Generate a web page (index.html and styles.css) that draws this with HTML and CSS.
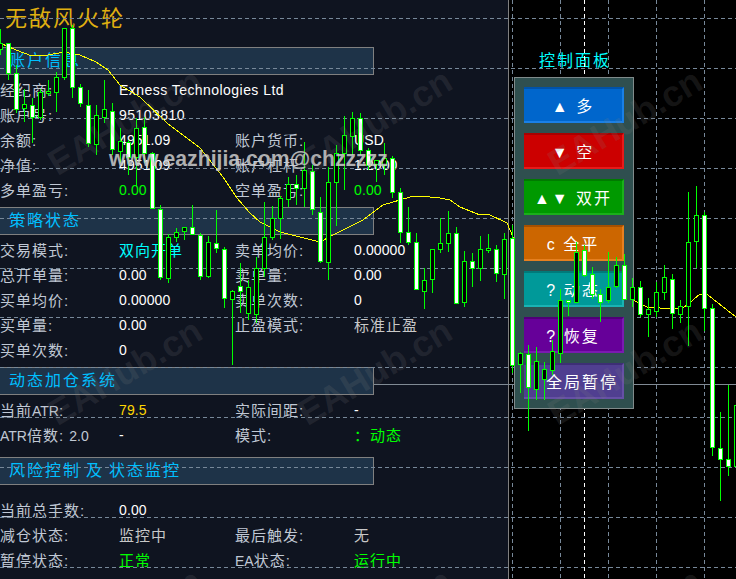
FILE: index.html
```html
<!DOCTYPE html>
<html lang="zh">
<head>
    <meta charset="UTF-8">
    <title>无敌风火轮</title>
    <link rel="stylesheet" href="styles.css">
</head>
<body>
    <div class="terminal">
        <div class="comment">4951.09 4951.50 4950.82 4951.09 1.2000 4951.09 4951.50 4950.82 4951.09 1.20</div>

        <div class="info-panel">
            <div class="ea-title">无敌风火轮</div>

            <section class="block block-account">
                <div class="block-head">账户信息</div>
                <div class="rows">
                    <span class="label">经纪商:</span><span class="value wide">Exness Technologies Ltd</span>
                    <span class="label">账户号:</span><span class="value wide">95103810</span>
                    <span class="label">余额:</span><span class="value">4951.09</span>
                    <span class="label">账户货币:</span><span class="value">USD</span>
                    <span class="label">净值:</span><span class="value">4951.09</span>
                    <span class="label">账户杠杆:</span><span class="value">1:2000</span>
                    <span class="label">多单盈亏:</span><span class="value green">0.00</span>
                    <span class="label">空单盈亏:</span><span class="value green">0.00</span>
                </div>
            </section>

            <section class="block block-strategy">
                <div class="block-head">策略状态</div>
                <div class="rows">
                    <span class="label">交易模式:</span><span class="value cjk cyan">双向开单</span>
                    <span class="label">卖单均价:</span><span class="value">0.00000</span>
                    <span class="label">总开单量:</span><span class="value">0.00</span>
                    <span class="label">卖单量:</span><span class="value">0.00</span>
                    <span class="label">买单均价:</span><span class="value">0.00000</span>
                    <span class="label">卖单次数:</span><span class="value">0</span>
                    <span class="label">买单量:</span><span class="value">0.00</span>
                    <span class="label">止盈模式:</span><span class="value cjk silver">标准止盈</span>
                    <span class="label">买单次数:</span><span class="value">0</span>
                </div>
            </section>

            <section class="block block-atr">
                <div class="block-head">动态加仓系统</div>
                <div class="rows">
                    <span class="label">当前<span class="latin">ATR</span>:</span><span class="value gold">79.5</span>
                    <span class="label">实际间距:</span><span class="value">-</span>
                    <span class="label"><span class="latin">ATR</span>倍数: <span class="latin">2.0</span></span><span class="value">-</span>
                    <span class="label">模式:</span><span class="value cjk green">：动态</span>
                </div>
            </section>

            <section class="block block-risk">
                <div class="block-head">风险控制 及 状态监控</div>
                <div class="rows rows-gap">
                    <span class="label">当前总手数:</span><span class="value">0.00</span>
                    <span class="empty"></span><span class="empty"></span>
                    <span class="label">减仓状态:</span><span class="value cjk silver">监控中</span>
                    <span class="label">最后触发:</span><span class="value cjk silver">无</span>
                    <span class="label">暂停状态:</span><span class="value cjk green">正常</span>
                    <span class="label"><span class="latin">EA</span>状态:</span><span class="value cjk green">运行中</span>
                </div>
            </section>
        </div>

        <div class="controls-title">控制面板</div>

        <svg class="layer" id="gridLayer" width="736" height="579"></svg>

        <div class="controls">
            <button class="btn btn-blue">▲ 多</button>
            <button class="btn btn-red">▼ 空</button>
            <button class="btn btn-green">▲▼ 双开</button>
            <button class="btn btn-orange">c 全平</button>
            <button class="btn btn-teal">? 动态</button>
            <button class="btn btn-purple">? 恢复</button>
            <button class="btn btn-slate">全局暂停</button>
        </div>

        <svg class="layer" id="candleLayer" width="736" height="579"></svg>

        <div class="contact">www.eazhijia.com@chzzzzz</div>

        <div class="watermarks">
            <span>EAHub.cn</span><span>EAHub.cn</span><span>EAHub.cn</span>
            <span>EAHub.cn</span><span>EAHub.cn</span><span>EAHub.cn</span>
            <span>EAHub.cn</span><span>EAHub.cn</span><span>EAHub.cn</span>
        </div>
    </div>

    <script src="chart.js"></script>
</body>
</html>
```

FILE: styles.css
```css
* {
    box-sizing: border-box;
}
body {
    margin: 0;
    background: #000;
    font-family: "Liberation Sans", "Noto Sans CJK SC", sans-serif;
}
.terminal {
    position: relative;
    width: 736px;
    height: 579px;
    overflow: hidden;
    background: #000;
}
.comment {
    position: absolute;
    top: -12px;
    left: 0;
    z-index: 1;
    font-size: 12px;
    line-height: 14px;
    letter-spacing: 0.4px;
    white-space: nowrap;
    color: #fff;
}
.info-panel {
    width: 509px;
    height: 579px;
    background: #0f1420;
    border-right: 1px solid #808080;
}
.ea-title {
    height: 47px;
    padding: 3px 0 0 5px;
    font-size: 22px;
    line-height: 32px;
    letter-spacing: 2px;
    color: #e0b010;
}
.block-account,
.block-strategy {
    height: 160px;
}
.block-atr {
    height: 90px;
}
.block-head {
    width: 375px;
    height: 28px;
    margin-left: -1px;
    padding-left: 9px;
    background: #1e3348;
    border: 1px solid #808080;
    font-size: 16px;
    line-height: 25px;
    letter-spacing: 2px;
    word-spacing: -1.5px;
    color: #00bfff;
}
.rows {
    display: grid;
    grid-template-columns: 119px 116px 119px 1fr;
    grid-auto-rows: 25px;
    padding-top: 3px;
    font-size: 14px;
    line-height: 25px;
    white-space: nowrap;
}
.rows-gap {
    padding-top: 13px;
}
.label {
    font-size: 15px;
    letter-spacing: 1px;
    color: #c0c8d4;
}
.latin {
    font-size: 14px;
    letter-spacing: 0;
}
.value {
    letter-spacing: 0.1px;
    color: #fff;
}
.wide {
    grid-column: span 3;
    letter-spacing: 0.45px;
}
.cjk {
    font-size: 15px;
    letter-spacing: 1px;
}
.cyan {
    color: #00ffff;
}
.green {
    color: #00ff00;
}
.gold {
    color: #ffd700;
}
.silver {
    color: #c8c8c8;
}
.controls-title {
    position: absolute;
    top: 49px;
    left: 539px;
    font-size: 16px;
    line-height: 24px;
    letter-spacing: 2px;
    color: #00ffff;
}
.layer {
    position: absolute;
    top: 0;
    left: 0;
}
.controls {
    position: absolute;
    top: 77px;
    left: 514px;
    width: 120px;
    height: 332px;
    padding: 9px;
    display: flex;
    flex-direction: column;
    gap: 10px;
    background: #2f4f4f;
    border: 1px solid #808a8a;
}
.btn {
    width: 100px;
    height: 36px;
    padding: 0;
    border: 0 solid;
    border-width: 2px 2px 2px 0;
    font-family: "Liberation Sans", "Noto Sans CJK SC", sans-serif;
    font-size: 16px;
    letter-spacing: 2px;
    color: #fff;
}
.btn-blue {
    background: #0066cc;
    border-color: #0052a8 #1a80e6 #1a80e6;
}
.btn-red {
    background: #cc0000;
    border-color: #a80000 #e61a1a #e61a1a;
}
.btn-green {
    background: #009900;
    border-color: #007a00 #1ab01a #1ab01a;
}
.btn-orange {
    background: #cc6600;
    border-color: #a65000 #e68020 #e68020;
}
.btn-teal {
    background: #009999;
    border-color: #007a7a #1ab3b3 #1ab3b3;
}
.btn-purple {
    background: #660099;
    border-color: #4f0077 #7a1ab0 #7a1ab0;
}
.btn-slate {
    padding-left: 18px;
    background: #503f90;
    border-color: #3d2f75 #6650a5 #6650a5;
}
.contact {
    position: absolute;
    top: 146px;
    left: 109px;
    font-size: 21.2px;
    font-weight: bold;
    line-height: 26px;
    white-space: nowrap;
    color: rgba(205, 205, 205, 0.85);
}
.watermarks {
    position: absolute;
    top: -3px;
    left: 0;
    display: grid;
    grid-template-columns: repeat(3, 250px);
    grid-auto-rows: 250px;
    place-items: center;
    pointer-events: none;
}
.watermarks span {
    font-size: 36px;
    font-weight: bold;
    line-height: 40px;
    color: rgba(128, 128, 128, 0.16);
    transform: rotate(-31deg);
}
```

FILE: chart.js
```js
const NS = 'http://www.w3.org/2000/svg';
const GRID = '#778899';

// high, low, body top, body bottom, 1 = white body (one candle every 8px, starting at x=0)
const CANDLES = [
    [29,55,43,49,0],[43,80,43,73,1],[65,113,73,109,1],[89,122,104,108,0],[98,143,105,117,1],
    [89,120,92,117,0],[80,96,91,92,0],[72,112,77,92,0],[28,80,28,77,0],[25,98,28,87,1],
    [84,107,87,103,1],[90,147,105,143,1],[105,155,115,144,0],[80,123,109,117,0],[103,155,111,149,1],
    [128,163,141,151,0],[140,175,142,157,1],[118,187,128,157,0],[117,163,127,153,1],[152,209,153,208,1],
    [205,280,209,277,1],[234,283,237,278,0],[228,242,232,237,0],[227,240,227,231,0],[205,235,227,234,1],
    [233,280,235,276,1],[236,278,242,276,0],[210,253,243,248,1],[247,308,249,298,1],[290,365,291,299,0],
    [263,313,286,291,1],[280,320,287,313,0],[257,323,268,314,0],[202,277,237,268,0],[206,240,218,237,0],
    [196,239,198,218,0],[177,207,184,199,0],[175,205,184,188,1],[142,207,170,188,0],[165,215,171,209,1],
    [197,263,212,261,1],[167,280,182,262,0],[145,226,153,182,0],[116,190,135,153,0],[112,155,118,136,0],
    [113,155,118,150,1],[148,170,150,165,1],[160,182,160,164,0],[143,175,158,165,0],[156,198,158,192,1],
    [188,243,192,232,1],[207,245,232,242,1],[233,290,242,289,1],[268,309,280,291,0],[249,293,249,279,0],
    [218,253,243,249,0],[211,252,233,243,0],[227,303,233,303,1],[251,307,261,302,0],[253,287,261,268,1],
    [236,281,249,268,0],[234,253,248,249,0],[245,282,249,273,1],[233,299,239,274,0],[225,373,238,365,1],
    [352,393,353,364,0],[345,431,354,387,1],[347,400,361,389,0],[362,400,369,379,0],[340,375,351,370,0],
    [289,363,300,353,0],[300,316,300,302,1],[242,303,252,302,0],[245,277,250,275,1],[267,299,274,294,1],
    [289,322,294,302,1],[252,303,287,300,0],[257,288,265,286,0],[254,300,265,299,1],[278,307,287,299,0],
    [281,317,287,314,1],[298,337,309,314,0],[282,317,292,311,0],[265,300,277,292,0],[274,329,279,313,1],
    [300,323,306,314,0],[192,346,242,306,0],[186,268,215,241,0],[212,331,215,308,1],[304,456,308,447,1],
    [412,501,448,459,1],[385,476,459,466,1],[405,466,405,466,0]
];

const MA = [
    [0,43],[16,50],[32,56],[48,55],[64,52],[80,55],[96,62],[108,70],[120,85],[140,97],[167,123],
    [200,148],[223,177],[237,198],[250,213],[260,222],[280,232],[300,237],[320,242],[333,235],
    [363,220],[383,205],[400,200],[410,197],[420,196],[440,198],[450,200],[460,207],[480,215],
    [488,214],[507,223],[513,237],[560,280],[633,300],[647,307],[673,309],[683,308],[693,300],
    [700,294],[708,295],[727,310],[736,317]
];

const H_LINES = [18, 68, 118, 168, 218, 268, 317, 367, 417, 467, 517, 567];
const V_LINES = [512, 560, 584, 608, 656, 704];

function add(parent, name, attrs) {
    const el = document.createElementNS(NS, name);
    for (const key in attrs) el.setAttribute(key, attrs[key]);
    parent.appendChild(el);
    return el;
}

function rect(parent, x, y, w, h, fill) {
    add(parent, 'rect', { x, y, width: w, height: h, fill, 'shape-rendering': 'crispEdges' });
}

function drawGrid() {
    const svg = document.getElementById('gridLayer');

    H_LINES.forEach(y => {
        add(svg, 'line', { x1: 0, x2: 736, y1: y + 0.5, y2: y + 0.5, stroke: GRID, 'stroke-dasharray': '4 3' });
    });
    V_LINES.forEach(x => {
        add(svg, 'line', {
            x1: x + 0.5, x2: x + 0.5, y1: 0, y2: 579,
            stroke: x === 584 ? '#fff' : GRID,
            'stroke-dasharray': '4 3'
        });
    });

    // current price line
    add(svg, 'line', { x1: 374, x2: 736, y1: 384.5, y2: 384.5, stroke: '#808a94' });

    add(svg, 'polyline', {
        points: MA.map(p => p.join(',')).join(' '),
        fill: 'none',
        stroke: '#ffff00',
        'shape-rendering': 'crispEdges'
    });
}

function drawCandles() {
    const svg = document.getElementById('candleLayer');

    CANDLES.forEach((c, i) => {
        const x = i * 8;
        const [high, low, top, bottom, bull] = c;
        const h = Math.max(bottom - top + 1, 3);

        rect(svg, x, high, 1, low - high, '#00ff00');
        rect(svg, x - 2, top, 5, h, '#00ff00');
        rect(svg, x - 1, top + 1, 3, h - 2, bull ? '#fff' : '#000');
    });
}

drawGrid();
drawCandles();
```
